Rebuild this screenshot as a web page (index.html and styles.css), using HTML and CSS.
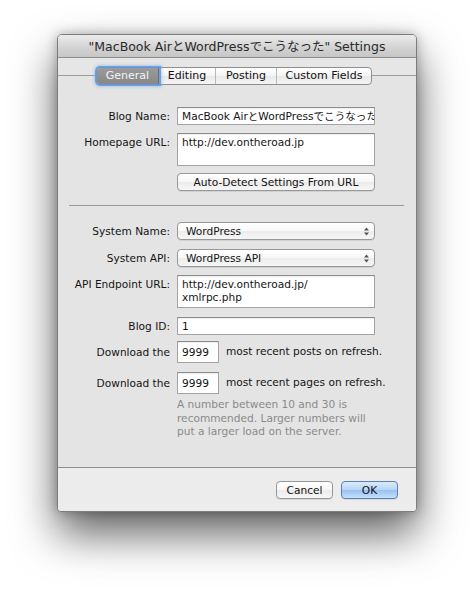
FILE: index.html
```html
<!DOCTYPE html>
<html>
<head>
<meta charset="utf-8">
<link rel="stylesheet" href="styles.css">
</head>
<body>
<div class="window">
  <div class="titlebar">"MacBook AirとWordPressでこうなった" Settings</div>
  <div class="content">
    <div class="tabview">
      <div class="tabs">
        <div class="tab selected">General</div>
        <div class="tab">Editing</div>
        <div class="tab">Posting</div>
        <div class="tab last">Custom Fields</div>
      </div>
      <div class="row r-blogname">
        <div class="label">Blog Name:</div>
        <div class="field single clip">MacBook AirとWordPressでこうなった</div>
      </div>
      <div class="row r-home">
        <div class="label">Homepage URL:</div>
        <div class="field multi">http://dev.ontheroad.jp</div>
      </div>
      <div class="row r-auto">
        <div class="label"></div>
        <div class="button wide">Auto-Detect Settings From URL</div>
      </div>
      <div class="separator"></div>
      <div class="row r-sysname">
        <div class="label">System Name:</div>
        <div class="popup"><span>WordPress</span><span class="arrows"><svg width="5" height="9" viewBox="0 0 5 9"><path d="M0 3.5L2.5 0.5L5 3.5Z M0 5.5L2.5 8.5L5 5.5Z" fill="#555"/></svg></span></div>
      </div>
      <div class="row r-sysapi">
        <div class="label">System API:</div>
        <div class="popup"><span>WordPress API</span><span class="arrows"><svg width="5" height="9" viewBox="0 0 5 9"><path d="M0 3.5L2.5 0.5L5 3.5Z M0 5.5L2.5 8.5L5 5.5Z" fill="#555"/></svg></span></div>
      </div>
      <div class="row r-endpoint">
        <div class="label">API Endpoint URL:</div>
        <div class="field multi">http://dev.ontheroad.jp/<br>xmlrpc.php</div>
      </div>
      <div class="row r-blogid">
        <div class="label">Blog ID:</div>
        <div class="field single">1</div>
      </div>
      <div class="row r-dl1">
        <div class="label">Download the</div>
        <div class="field small">9999</div>
        <div class="after">most recent posts on refresh.</div>
      </div>
      <div class="row r-dl2">
        <div class="label">Download the</div>
        <div class="field small">9999</div>
        <div class="after">most recent pages on refresh.</div>
      </div>
      <div class="help">A number between 10 and 30 is<br>recommended. Larger numbers will<br>put a larger load on the server.</div>
    </div>
    <div class="footer">
      <div class="button push">Cancel</div>
      <div class="button push default">OK</div>
    </div>
  </div>
</div>
</body>
</html>
```
FILE: styles.css
```css
html, body {
  margin: 0;
  padding: 0;
  background: #ffffff;
}
body {
  width: 474px;
  height: 591px;
  overflow: hidden;
  font-family: "DejaVu Sans", "Noto Sans CJK JP", sans-serif;
  font-size: 10.6px;
  color: #141414;
}
.window {
  margin: 34px 0 0 57px;
  width: 360px;
  height: 478px;
  box-sizing: border-box;
  border: 1px solid #7d7d7d;
  border-radius: 5px 5px 4px 4px;
  background: #e6e6e6;
  box-shadow: 0 22px 44px rgba(0,0,0,0.62), 0 0 12px rgba(0,0,0,0.28);
  overflow: hidden;
}
.titlebar {
  height: 22px;
  border-bottom: 1px solid #8c8c8c;
  background: linear-gradient(#ebebeb, #d2d2d2 60%, #c6c6c6);
  text-align: center;
  font-size: 12.5px;
  line-height: 23px;
  color: #2a2a2a;
  white-space: nowrap;
}
.content {
  height: 453px;
  display: flex;
  flex-direction: column;
}
.tabview {
  margin-top: 17px;
  height: 393px;
  box-sizing: border-box;
  border-top: 1px solid #9c9c9c;
  border-bottom: 1px solid #8e8e8e;
  background: #e4e4e4;
}
.tabs {
  margin: -9px auto 0 38px;
  width: 276px;
  height: 18px;
  box-sizing: border-box;
  display: flex;
  border: 1px solid #8f8f8f;
  border-radius: 4px;
  background: linear-gradient(#ffffff, #f3f3f3 50%, #e9e9e9 51%, #f4f4f4);
}
.tab {
  height: 16px;
  line-height: 16px;
  text-align: center;
  border-right: 1px solid #b8b8b8;
  color: #111;
  font-size: 11px;
}
.tab:nth-child(1) { width: 61px; }
.tab:nth-child(2) { width: 56px; }
.tab:nth-child(3) { width: 60px; }
.tab.last { flex: 1; border-right: none; }
.tab.selected {
  background: linear-gradient(#9b9b9b, #878787);
  color: #f4f4f4;
  border-radius: 3px 0 0 3px;
  border-right: 1px solid #6f6f6f;
  box-shadow: 0 0 0 2px rgba(98,150,220,0.85), 0 0 3px 3px rgba(120,170,235,0.5);
  position: relative;
}
.row {
  display: flex;
  align-items: flex-start;
  gap: 7px;
}
.label {
  width: 112px;
  flex: none;
  text-align: right;
  padding-top: 3px;
  white-space: nowrap;
}
.field {
  width: 198px;
  box-sizing: border-box;
  background: #ffffff;
  border: 1px solid #a4a4a4;
  border-top-color: #8c8c8c;
  box-shadow: inset 0 1px 1px rgba(0,0,0,0.08);
  padding: 2px 0 0 4px;
  line-height: 13px;
  white-space: nowrap;
  overflow: hidden;
}
.field.single { height: 18px; }
.field.multi { height: 33px; }
.field.small { width: 42px; height: 22px; padding-top: 4px; }
.after { padding-top: 4px; white-space: nowrap; }
.r-blogname { margin-top: 22px; }
.r-home { margin-top: 8px; }
.r-auto { margin-top: 7px; }
.r-sysname { margin-top: 16px; }
.r-sysapi { margin-top: 9px; }
.r-endpoint { margin-top: 8px; }
.r-blogid { margin-top: 9px; }
.r-dl1 { margin-top: 6px; }
.r-dl2 { margin-top: 9px; }
.r-dl1 .label, .r-dl2 .label { padding-top: 5px; }
.separator {
  margin: 14px 12px 0 11px;
  height: 1px;
  background: #9a9a9a;
}
.button {
  box-sizing: border-box;
  height: 18px;
  line-height: 16px;
  text-align: center;
  border: 1px solid #979797;
  border-radius: 4px;
  background: linear-gradient(#ffffff, #f6f6f6 50%, #ebebeb 51%, #f7f7f7);
  box-shadow: 0 1px 0 rgba(0,0,0,0.08);
  color: #111;
}
.button.wide { width: 198px; }
.popup {
  width: 198px;
  height: 18px;
  box-sizing: border-box;
  border: 1px solid #979797;
  border-radius: 4px;
  background: linear-gradient(#ffffff, #f7f7f7 50%, #ececec 51%, #f6f6f6);
  box-shadow: 0 1px 0 rgba(0,0,0,0.08);
  display: flex;
  justify-content: space-between;
  align-items: center;
  padding: 0 5px 0 8px;
  line-height: 16px;
}
.arrows { display: flex; align-items: center; }
.help {
  margin: 4px 0 0 119px;
  color: #8a8a8a;
  line-height: 13.5px;
}
.footer {
  flex: 1;
  background: #ececec;
  display: flex;
  justify-content: flex-end;
  align-items: flex-start;
  gap: 8px;
  padding: 13px 18px 0 0;
}
.button.push { width: 57px; }
.button.default {
  border-color: #5d80b3;
  background: linear-gradient(#dbeafb, #b7d5f7 50%, #96c1f1 51%, #c4e0fb);
  color: #111;
}
```
